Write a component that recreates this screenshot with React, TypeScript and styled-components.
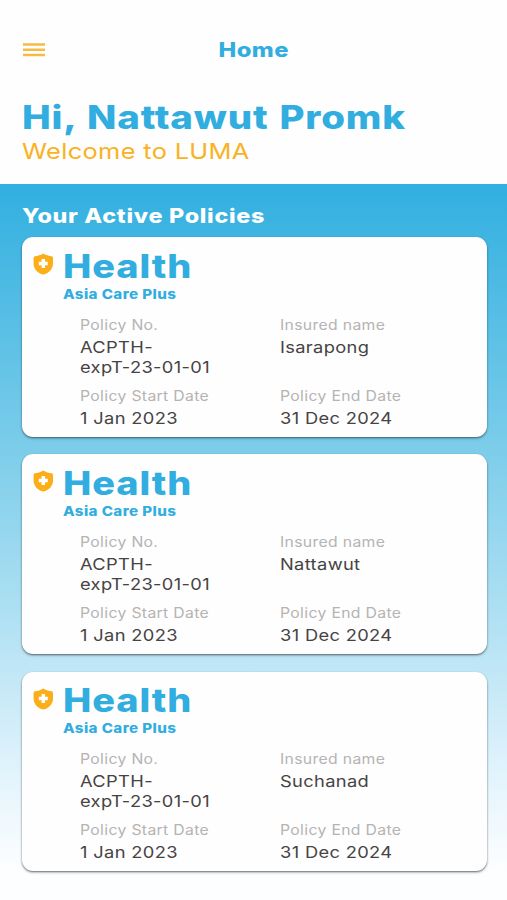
import React from "react";
import styled, { createGlobalStyle } from "styled-components";

const blue = "#31addf";
const amber = "#f9b224";

const GlobalStyle = createGlobalStyle`
  * { box-sizing: border-box; }
  body { margin: 0; background: #fefefe; font-family: Inter, "Liberation Sans", sans-serif; }
`;

const Screen = styled.div`
  height: 900px;
  overflow: hidden;
  display: flex;
  flex-direction: column;
`;

/* Wide-set text: the glyphs are stretched horizontally from the left edge. */
const Wide = styled.span<{ $x: number; $center?: boolean }>`
  display: block;
  width: max-content;
  white-space: nowrap;
  transform: scaleX(${(p) => p.$x});
  transform-origin: ${(p) => (p.$center ? "center" : "left")};
`;

const Header = styled.header`
  height: 184px;
  padding: 0 22px;
  flex: none;
`;

const NavBar = styled.div`
  display: grid;
  grid-template-columns: 24px 1fr 24px;
  align-items: center;
  height: 30px;
  margin-top: 34px;
`;

const MenuIcon = styled.svg`
  display: block;
  width: 24px;
  height: 16px;
`;

const NavTitle = styled.h1`
  margin: 0;
  display: flex;
  justify-content: center;
  padding-top: 1px;
  font-size: 20px;
  line-height: 30px;
  font-weight: 800;
  letter-spacing: 0.4px;
  color: ${blue};
`;

const Greeting = styled.h2`
  margin: 34px 0 0 0.4px;
  font-size: 32.5px;
  line-height: 40px;
  font-weight: 800;
  letter-spacing: 0.7px;
  word-spacing: 1.5px;
  color: ${blue};
`;

const Welcome = styled.p`
  margin: 0;
  font-size: 22px;
  line-height: 27.6px;
  letter-spacing: 0.3px;
  color: ${amber};
`;

const Policies = styled.main`
  flex: 1;
  padding: 16.5px 20.3px 0 21.6px;
  background: linear-gradient(#31afe0 0%, #7ccdea 37%, #bce5f5 66%, #e3f4fc 83%, #fdfeff 96%);
`;

const SectionTitle = styled.h3`
  margin: 0 0 6.7px 0.2px;
  font-size: 20px;
  line-height: 30px;
  font-weight: 800;
  letter-spacing: 0.6px;
  color: #fff;
`;

const CardList = styled.div`
  display: grid;
  gap: 17.6px;
`;

const Card = styled.article`
  height: 199.6px;
  padding: 11.4px 11px 0;
  border-radius: 11px;
  background: #fefefe;
  box-shadow: 0 1px 2px rgba(40, 50, 55, 0.65), 0 2px 3px rgba(40, 50, 55, 0.12);
`;

const CardHead = styled.div`
  display: grid;
  grid-template-columns: 30px 1fr;
`;

const Shield = styled.svg`
  display: block;
  width: 21px;
  height: 22px;
  margin-top: 4.6px;
`;

const Kind = styled.div`
  font-size: 32px;
  line-height: 36px;
  font-weight: 800;
  letter-spacing: 0.8px;
  color: ${blue};
`;

const Plan = styled.div`
  font-size: 13px;
  line-height: 18px;
  font-weight: 800;
  letter-spacing: 0.35px;
  color: ${blue};
`;

const Fields = styled.dl`
  display: grid;
  grid-template-columns: 200px 1fr;
  row-gap: 9.2px;
  margin: 12.5px 0 0 47px;
`;

const Label = styled.dt`
  font-size: 14px;
  line-height: 20px;
  letter-spacing: 0.3px;
  color: #b5b3b3;
`;

const Value = styled.dd`
  margin: 1.8px 0 0;
  font-size: 16.2px;
  line-height: 20px;
  letter-spacing: 0.3px;
  color: #474344;
`;

function Field({ label, lines }: { label: string; lines: string[] }) {
  return (
    <div>
      <Label><Wide $x={1.125}>{label}</Wide></Label>
      <Value>{lines.map((l) => <Wide $x={1.13} key={l}>{l}</Wide>)}</Value>
    </div>
  );
}

function PolicyCard({ name }: { name: string }) {
  return (
    <Card>
      <CardHead>
        <Shield viewBox="0 0 21 22">
          <path d="M10.3.4C8 2 4.3 2.9 2 3.3Q.6 3.6.6 5V10.4C.6 15.5 4.2 19.9 10.3 21.6C16.4 19.9 20 15.5 20 10.4V5Q20 3.6 18.6 3.3C16.3 2.9 12.6 2 10.3.4Z" fill="#fbae17" />
          <path d="M10.3 6V15M5.8 10.5H14.8" stroke="#fff" strokeWidth="3.5" />
        </Shield>
        <div>
          <Kind><Wide $x={1.183}>Health</Wide></Kind>
          <Plan><Wide $x={1.165}>Asia Care Plus</Wide></Plan>
        </div>
      </CardHead>
      <Fields>
        <Field label="Policy No." lines={["ACPTH-", "expT-23-01-01"]} />
        <Field label="Insured name" lines={[name]} />
        <Field label="Policy Start Date" lines={["1 Jan 2023"]} />
        <Field label="Policy End Date" lines={["31 Dec 2024"]} />
      </Fields>
    </Card>
  );
}

export default function App() {
  return (
    <Screen>
      <GlobalStyle />
      <Header>
        <NavBar>
          <MenuIcon viewBox="0 0 24 16">
            <path d="M1 2.5H23M1 7.8H23M1 13H23" stroke="#f5bb45" strokeWidth="2.4" />
          </MenuIcon>
          <NavTitle><Wide $x={1.185} $center>Home</Wide></NavTitle>
        </NavBar>
        <Greeting><Wide $x={1.182}>Hi, Nattawut Promk</Wide></Greeting>
        <Welcome><Wide $x={1.153}>Welcome to LUMA</Wide></Welcome>
      </Header>
      <Policies>
        <SectionTitle><Wide $x={1.167}>Your Active Policies</Wide></SectionTitle>
        <CardList>
          {["Isarapong", "Nattawut", "Suchanad"].map((n) => <PolicyCard key={n} name={n} />)}
        </CardList>
      </Policies>
    </Screen>
  );
}
